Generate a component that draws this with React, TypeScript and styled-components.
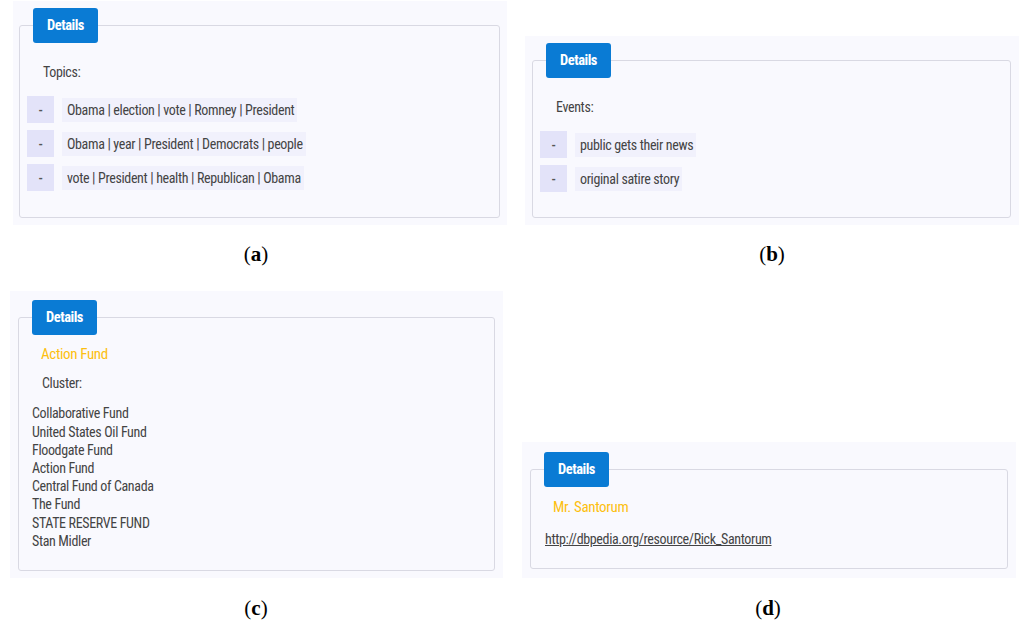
import styled, {createGlobalStyle} from 'styled-components';

const GlobalStyle = createGlobalStyle`
  html, body {
    margin: 0;
    padding: 0;
    background: #fff;
  }
  body {
    font-family: 'Roboto Condensed', 'Roboto', sans-serif;
    font-stretch: 76%;
    letter-spacing: -0.35px;
    color: #444;
  }
`;

const Figure = styled.div`
  display: grid;
  grid-template-columns: 512px 512px;
  grid-template-rows: 225px 65px 288px 50px;
  width: 1024px;
  height: 628px;
  overflow: hidden;
`;

const Panel = styled.div<{
  $left: number;
  $width: number;
  $inL: number;
  $inR: number;
  $inT?: number;
  $inB?: number;
}>`
  align-self: end;
  margin-left: ${p => p.$left}px;
  width: ${p => p.$width}px;
  box-sizing: border-box;
  background: #f9f9fe;
  padding: ${p => p.$inT ?? 7}px ${p => p.$inR}px ${p => p.$inB ?? 7}px ${p => p.$inL}px;
`;

const Box = styled.fieldset<{$bottom: number}>`
  margin: 0;
  border: 1px solid #d9d9e3;
  border-radius: 3px;
  padding: 0 7px ${p => p.$bottom}px 7px;
  min-width: 0;
`;

const Legend = styled.legend`
  display: flex;
  align-items: center;
  justify-content: center;
  margin-left: 6px;
  padding: 0;
  width: 65px;
  height: 35px;
  background: #0a7bd4;
  border-radius: 3px;
  color: #fff;
  font-weight: 700;
  font-size: 14.5px;
  letter-spacing: -0.5px;
`;

const Label = styled.div<{$top: number}>`
  margin: ${p => p.$top}px 0 0 16px;
  font-size: 14px;
  line-height: 18px;
  color: #444;
`;

const Title = styled.div<{$top: number}>`
  margin: ${p => p.$top}px 0 0 15px;
  font-size: 15px;
  line-height: 18px;
  color: #fdbf10;
`;

const Rows = styled.div`
  display: flex;
  flex-direction: column;
  gap: 7px;
  margin-top: 15px;
`;

const Row = styled.div`
  display: flex;
  align-items: center;
  gap: 8px;
`;

const Dash = styled.span`
  display: flex;
  align-items: center;
  justify-content: center;
  width: 27px;
  height: 27px;
  background: #e3e3f9;
  font-size: 14px;
  font-weight: 500;
  color: #555;
`;

const Tag = styled.span`
  display: inline-block;
  padding: 0 3px 0 5px;
  height: 24px;
  line-height: 24px;
  background: #f1f1fc;
  font-size: 14px;
  color: #444;
`;

const List = styled.div`
  margin-top: 12px;
  padding-left: 6px;
  font-size: 14px;
  line-height: 18.2px;
  color: #444;
`;

const Link = styled.a`
  display: inline-block;
  margin: 14px 0 0 7px;
  font-size: 14px;
  line-height: 18px;
  color: #444;
  text-decoration: underline;
`;

const Caption = styled.div<{$top: number; $shift?: number}>`
  padding-top: ${p => p.$top}px;
  padding-left: ${p => (p.$shift ?? 0) * 2}px;
  text-align: center;
  font-family: 'Liberation Serif', serif;
  font-stretch: normal;
  letter-spacing: normal;
  font-size: 21px;
  line-height: 26px;
  color: #000;

  b {
    font-weight: 700;
  }
`;

const topics = [
  'Obama | election | vote | Romney | President',
  'Obama | year | President | Democrats | people',
  'vote | President | health | Republican | Obama',
];

const events = ['public gets their news', 'original satire story'];

const cluster = [
  'Collaborative Fund',
  'United States Oil Fund',
  'Floodgate Fund',
  'Action Fund',
  'Central Fund of Canada',
  'The Fund',
  'STATE RESERVE FUND',
  'Stan Midler',
];

function TagRows({items}: {items: string[]}) {
  return (
    <Rows>
      {items.map(t => (
        <Row key={t}>
          <Dash>-</Dash>
          <Tag>{t}</Tag>
        </Row>
      ))}
    </Rows>
  );
}

export default function App() {
  return (
    <>
      <GlobalStyle />
      <Figure>
        <Panel $left={13} $width={494} $inL={6} $inR={7}>
          <Box $bottom={26}>
            <Legend>Details</Legend>
            <Label $top={20}>Topics:</Label>
            <TagRows items={topics} />
          </Box>
        </Panel>
        <Panel $left={13} $width={494} $inL={7} $inR={8}>
          <Box $bottom={25}>
            <Legend>Details</Legend>
            <Label $top={20}>Events:</Label>
            <TagRows items={events} />
          </Box>
        </Panel>

        <Caption $top={16}>
          (<b>a</b>)
        </Caption>
        <Caption $top={16} $shift={4}>
          (<b>b</b>)
        </Caption>

        <Panel $left={10} $width={493} $inL={8} $inR={8} $inT={9}>
          <Box $bottom={20}>
            <Legend>Details</Legend>
            <Title $top={10}>Action Fund</Title>
            <Label $top={11}>Cluster:</Label>
            <List>
              {cluster.map(c => (
                <div key={c}>{c}</div>
              ))}
            </List>
          </Box>
        </Panel>
        <Panel $left={10} $width={494} $inL={8} $inR={8} $inT={10} $inB={9}>
          <Box $bottom={20}>
            <Legend>Details</Legend>
            <Title $top={11}>Mr. Santorum</Title>
            <Link href="#">http://dbpedia.org/resource/Rick_Santorum</Link>
          </Box>
        </Panel>

        <Caption $top={17}>
          (<b>c</b>)
        </Caption>
        <Caption $top={17}>
          (<b>d</b>)
        </Caption>
      </Figure>
    </>
  );
}
